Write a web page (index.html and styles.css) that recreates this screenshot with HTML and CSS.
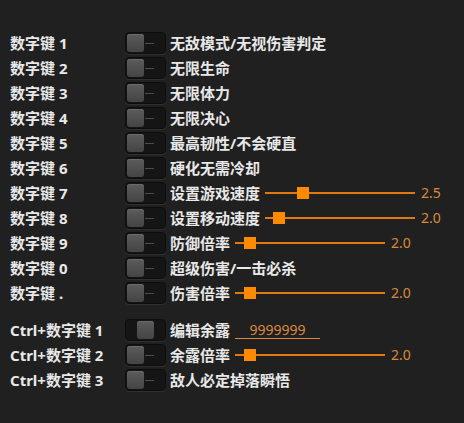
FILE: index.html
```html
<!DOCTYPE html>
<html lang="zh">
<head>
<meta charset="utf-8">
<link rel="stylesheet" href="styles.css">
</head>
<body>
<div class="panel">
  <div class="group">
    <div class="row"><span class="key">数字键 1</span><span class="toggle"><span class="knob"></span><span class="dash"></span></span><span class="desc">无敌模式/无视伤害判定</span></div>
    <div class="row"><span class="key">数字键 2</span><span class="toggle"><span class="knob"></span><span class="dash"></span></span><span class="desc">无限生命</span></div>
    <div class="row"><span class="key">数字键 3</span><span class="toggle"><span class="knob"></span><span class="dash"></span></span><span class="desc">无限体力</span></div>
    <div class="row"><span class="key">数字键 4</span><span class="toggle"><span class="knob"></span><span class="dash"></span></span><span class="desc">无限决心</span></div>
    <div class="row"><span class="key">数字键 5</span><span class="toggle"><span class="knob"></span><span class="dash"></span></span><span class="desc">最高韧性/不会硬直</span></div>
    <div class="row"><span class="key">数字键 6</span><span class="toggle"><span class="knob"></span><span class="dash"></span></span><span class="desc">硬化无需冷却</span></div>
    <div class="row"><span class="key">数字键 7</span><span class="toggle"><span class="knob"></span><span class="dash"></span></span><span class="desc">设置游戏速度</span><span class="slider"><span class="thumb" style="left:32px"></span></span><span class="value">2.5</span></div>
    <div class="row"><span class="key">数字键 8</span><span class="toggle"><span class="knob"></span><span class="dash"></span></span><span class="desc">设置移动速度</span><span class="slider"><span class="thumb" style="left:8px"></span></span><span class="value">2.0</span></div>
    <div class="row"><span class="key">数字键 9</span><span class="toggle"><span class="knob"></span><span class="dash"></span></span><span class="desc">防御倍率</span><span class="slider"><span class="thumb" style="left:9px"></span></span><span class="value">2.0</span></div>
    <div class="row"><span class="key">数字键 0</span><span class="toggle"><span class="knob"></span><span class="dash"></span></span><span class="desc">超级伤害/一击必杀</span></div>
    <div class="row"><span class="key">数字键 .</span><span class="toggle"><span class="knob"></span><span class="dash"></span></span><span class="desc">伤害倍率</span><span class="slider"><span class="thumb" style="left:9px"></span></span><span class="value">2.0</span></div>
  </div>
  <div class="group">
    <div class="row"><span class="key">Ctrl+数字键 1</span><span class="toggle button"><span class="knob"></span></span><span class="desc">编辑余露</span><span class="field">9999999</span></div>
    <div class="row"><span class="key">Ctrl+数字键 2</span><span class="toggle"><span class="knob"></span><span class="dash"></span></span><span class="desc">余露倍率</span><span class="slider"><span class="thumb" style="left:9px"></span></span><span class="value">2.0</span></div>
    <div class="row"><span class="key">Ctrl+数字键 3</span><span class="toggle"><span class="knob"></span><span class="dash"></span></span><span class="desc">敌人必定掉落瞬悟</span></div>
  </div>
</div>
</body>
</html>
```

FILE: styles.css
```css
html, body {
  margin: 0;
  padding: 0;
  background: #202020;
}
body {
  width: 464px;
  height: 423px;
  overflow: hidden;
  font-family: "Noto Sans", "Noto Sans CJK SC", sans-serif;
  color: #e8e8e8;
}
.panel {
  padding: 32px 0 0 10px;
  display: flex;
  flex-direction: column;
  gap: 15px;
}
.group {
  display: flex;
  flex-direction: column;
  gap: 3px;
}
.row {
  display: flex;
  align-items: center;
  height: 22px;
}
.key {
  width: 115px;
  font-size: 15px;
  font-weight: 700;
  line-height: 22px;
  white-space: nowrap;
}
.toggle {
  box-sizing: border-box;
  width: 41px;
  height: 22px;
  padding: 1px;
  display: flex;
  align-items: center;
  background: #151515;
  border: 1px solid #0d0d0d;
  border-radius: 4px;
  box-shadow: 0 1px 0 #303030;
}
.toggle.button {
  justify-content: center;
}
.knob {
  width: 17px;
  height: 18px;
  border-radius: 3px;
  background: linear-gradient(#5c5c5c, #444444);
  box-shadow: inset 0 1px 0 #6a6a6a;
}
.dash {
  width: 9px;
  height: 1px;
  margin-left: 1px;
  background: #4c4c4c;
}
.desc {
  margin-left: 4px;
  font-size: 15px;
  font-weight: 700;
  line-height: 22px;
  white-space: nowrap;
}
.slider {
  position: relative;
  width: 150px;
  height: 2px;
  margin-left: 5px;
  background: #e07a10;
}
.thumb {
  position: absolute;
  top: -5px;
  width: 12px;
  height: 12px;
  background: #ff8a00;
}
.value {
  margin-left: 6px;
  font-size: 14px;
  color: #d9893a;
  line-height: 22px;
}
.field {
  box-sizing: border-box;
  width: 85px;
  height: 18px;
  margin-left: 5px;
  border-bottom: 1px solid #d9893a;
  text-align: center;
  font-size: 14px;
  line-height: 18px;
  color: #d9893a;
}
```
